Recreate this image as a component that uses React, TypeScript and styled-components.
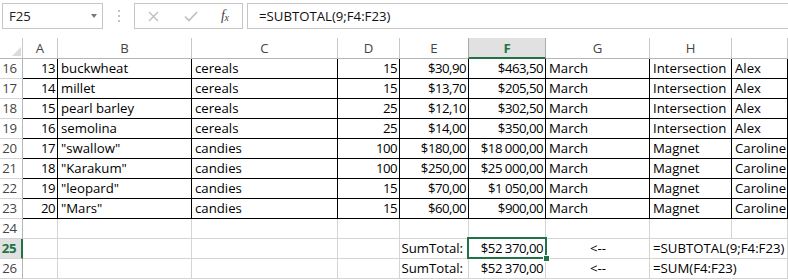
import React from 'react';
import styled, { createGlobalStyle, css } from 'styled-components';

const GREEN = '#217346';
const GRID = '#d4d4d4';
const HDR_LINE = '#c8c8c8';
const FONT = `'Open Sans', 'Liberation Sans', sans-serif`;
const FS = '13.2px';
const COLS = '23px 35px 134px 146px 62px 69px 77px 104px 82px 1fr';

const GlobalStyle = createGlobalStyle`
  html, body { margin: 0; padding: 0; background: #fff; }
  body { font-family: ${FONT}; }
`;

const Page = styled.div`
  width: 788px;
  height: 280px;
  overflow: hidden;
  background: #fff;
  display: flex;
  flex-direction: column;
`;

const FormulaBar = styled.div`
  display: flex;
  align-items: stretch;
  height: 26px;
  margin-top: 3px;
  margin-bottom: 9px;
`;

const NameBox = styled.div`
  box-sizing: border-box;
  width: 101px;
  margin-left: 2px;
  border: 1px solid #c6c6c6;
  display: flex;
  align-items: center;
  padding-left: 6px;
  font-size: ${FS};
  color: #222;
`;

const Caret = styled.span`
  margin-left: auto;
  margin-right: 5px;
  width: 0;
  height: 0;
  border-left: 3.5px solid transparent;
  border-right: 3.5px solid transparent;
  border-top: 4px solid #777;
`;

const Dots = styled.div`
  width: 31px;
  display: flex;
  flex-direction: column;
  align-items: center;
  justify-content: center;
  gap: 3px;
`;

const Dot = styled.span`
  width: 2px;
  height: 2px;
  background: #c2c2c2;
`;

const ButtonBox = styled.div`
  box-sizing: border-box;
  width: 109px;
  border: 1px solid #c6c6c6;
  display: flex;
  align-items: center;
  padding-left: 13px;
`;

const IconSlot = styled.span<{ $w: number }>`
  width: ${(p) => p.$w}px;
  display: flex;
  align-items: center;
`;

const Fx = styled.span`
  font-family: 'Liberation Serif', 'DejaVu Serif', serif;
  font-style: italic;
  font-size: 14px;
  color: #444;
  letter-spacing: -0.5px;
  sub {
    font-size: 10px;
    vertical-align: baseline;
    position: relative;
    top: 1px;
  }
`;

const FormulaInput = styled.div`
  box-sizing: border-box;
  flex: 1;
  margin-left: 4px;
  border: 1px solid #c6c6c6;
  border-right: none;
  display: flex;
  align-items: center;
  padding-left: 11px;
  font-size: ${FS};
  color: #111;
  white-space: nowrap;
`;

const Sheet = styled.div`
  display: flex;
  flex-direction: column;
`;

const Row = styled.div<{ $h: number }>`
  display: grid;
  grid-template-columns: ${COLS};
  height: ${(p) => p.$h}px;
`;

const Corner = styled.div`
  box-sizing: border-box;
  border-right: 1px solid ${HDR_LINE};
  border-bottom: 1px solid #b6b6b6;
  position: relative;
  &::after {
    content: '';
    position: absolute;
    right: 1px;
    bottom: 2px;
    width: 0;
    height: 0;
    border-left: 9px solid transparent;
    border-bottom: 9px solid #dcdcdc;
  }
`;

const ColHead = styled.div<{ $sel?: boolean }>`
  box-sizing: border-box;
  border-right: 1px solid ${HDR_LINE};
  border-bottom: 1px solid #b6b6b6;
  display: flex;
  align-items: center;
  justify-content: center;
  font-size: ${FS};
  color: #444;
  ${(p) =>
    p.$sel &&
    css`
      background: #e1e1e1;
      color: ${GREEN};
      font-weight: 700;
      border-bottom: 2px solid ${GREEN};
      border-left: 1px solid #ababab;
      margin-left: -1px;
      border-right-color: #ababab;
    `}
`;

const RowHead = styled.div<{ $sel?: boolean }>`
  box-sizing: border-box;
  border-right: 1px solid #b6b6b6;
  border-bottom: 1px solid ${GRID};
  display: flex;
  align-items: flex-end;
  justify-content: center;
  padding-right: 3px;
  padding-bottom: 1px;
  line-height: 17px;
  font-size: ${FS};
  letter-spacing: -0.4px;
  color: #444;
  ${(p) =>
    p.$sel &&
    css`
      background: #e1e1e1;
      color: ${GREEN};
      font-weight: 700;
      border-right: 2px solid ${GREEN};
    `}
`;

type Line = 'black' | 'grid' | 'none';
type Align = 'left' | 'right' | 'center';

const lineColor = (l: Line) => (l === 'black' ? '#000' : l === 'grid' ? GRID : 'transparent');

const Cell = styled.div<{ $right: Line; $bottom: Line; $align: Align; $num?: boolean; $pr?: number }>`
  box-sizing: border-box;
  position: relative;
  border-right: 1px solid ${(p) => lineColor(p.$right)};
  border-bottom: 1px solid ${(p) => lineColor(p.$bottom)};
  display: flex;
  align-items: flex-end;
  justify-content: ${(p) =>
    p.$align === 'right' ? 'flex-end' : p.$align === 'center' ? 'center' : 'flex-start'};
  padding: 0 ${(p) => p.$pr ?? 2}px 1px 3px;
  line-height: 17px;
  font-size: ${FS};
  letter-spacing: ${(p) => (p.$num ? '-0.5px' : '0')};
  color: #000;
  white-space: pre;
  overflow: visible;
  min-width: 0;
`;

const Selection = styled.div`
  position: absolute;
  left: -2px;
  top: -2px;
  right: -2px;
  bottom: -1px;
  border: 2px solid ${GREEN};
  pointer-events: none;
  z-index: 2;
`;

const FillHandle = styled.span`
  position: absolute;
  right: -5px;
  bottom: -5px;
  width: 5px;
  height: 5px;
  background: ${GREEN};
  border: 1px solid #fff;
`;

const letters = ['A', 'B', 'C', 'D', 'E', 'F', 'G', 'H', 'I'];
const dataAlign: Align[] = ['right', 'left', 'left', 'right', 'right', 'right', 'left', 'left', 'left'];
const isNum = [true, false, false, true, true, true, false, false, false];

const data: string[][] = [
  ['13', 'buckwheat', 'cereals', '15', '$30,90', '$463,50', 'March', 'Intersection', 'Alex'],
  ['14', 'millet', 'cereals', '15', '$13,70', '$205,50', 'March', 'Intersection', 'Alex'],
  ['15', 'pearl barley', 'cereals', '25', '$12,10', '$302,50', 'March', 'Intersection', 'Alex'],
  ['16', 'semolina', 'cereals', '25', '$14,00', '$350,00', 'March', 'Intersection', 'Alex'],
  ['17', '"swallow"', 'candies', '100', '$180,00', '$18 000,00', 'March', 'Magnet', 'Caroline'],
  ['18', '"Karakum"', 'candies', '100', '$250,00', '$25 000,00', 'March', 'Magnet', 'Caroline'],
  ['19', '"leopard"', 'candies', '15', '$70,00', '$1 050,00', 'March', 'Magnet', 'Caroline'],
  ['20', '"Mars"', 'candies', '15', '$60,00', '$900,00', 'March', 'Magnet', 'Caroline'],
];

const totals = [
  { row: 25, formula: '=SUBTOTAL(9;F4:F23)', selected: true },
  { row: 26, formula: '=SUM(F4:F23)', selected: false },
];

const XIcon = () => (
  <svg width="11" height="11" viewBox="0 0 11 11">
    <path d="M1 1 L10 10 M10 1 L1 10" stroke="#bdbdbd" strokeWidth="1.3" fill="none" />
  </svg>
);

const CheckIcon = () => (
  <svg width="14" height="11" viewBox="0 0 14 11">
    <path d="M1 5.5 L5 9.5 L13 1" stroke="#bdbdbd" strokeWidth="1.6" fill="none" />
  </svg>
);

export default function App() {
  return (
    <>
      <GlobalStyle />
      <Page>
        <FormulaBar>
          <NameBox>
            F25
            <Caret />
          </NameBox>
          <Dots>
            <Dot />
            <Dot />
            <Dot />
          </Dots>
          <ButtonBox>
            <IconSlot $w={36}>
              <XIcon />
            </IconSlot>
            <IconSlot $w={37}>
              <CheckIcon />
            </IconSlot>
            <IconSlot $w={20}>
              <Fx>
                f<sub>x</sub>
              </Fx>
            </IconSlot>
          </ButtonBox>
          <FormulaInput>=SUBTOTAL(9;F4:F23)</FormulaInput>
        </FormulaBar>
        <Sheet>
          <Row $h={21}>
            <Corner />
            {letters.map((l) => (
              <ColHead key={l} $sel={l === 'F'}>
                {l === 'I' ? '' : l}
              </ColHead>
            ))}
          </Row>
          {data.map((r, i) => (
            <Row $h={20} key={i}>
              <RowHead>{16 + i}</RowHead>
              {r.map((v, j) => (
                <Cell key={j} $right="black" $bottom="black" $align={dataAlign[j]} $num={isNum[j]}>
                  {v}
                </Cell>
              ))}
            </Row>
          ))}
          <Row $h={20}>
            <RowHead>24</RowHead>
            {letters.map((l) => (
              <Cell key={l} $right="grid" $bottom="grid" $align="left" />
            ))}
          </Row>
          {totals.map((t) => (
            <Row $h={20} key={t.row}>
              <RowHead $sel={t.selected}>{t.row}</RowHead>
              <Cell $right="grid" $bottom="grid" $align="left" />
              <Cell $right="grid" $bottom="grid" $align="left" />
              <Cell $right="grid" $bottom="grid" $align="left" />
              <Cell $right="grid" $bottom="grid" $align="left" />
              <Cell $right="grid" $bottom="grid" $align="right" $pr={5}>
                SumTotal:
              </Cell>
              <Cell $right="grid" $bottom="grid" $align="right" $num>
                $52 370,00
                {t.selected && (
                  <Selection>
                    <FillHandle />
                  </Selection>
                )}
              </Cell>
              <Cell $right="grid" $bottom="grid" $align="center">
                {'<--'}
              </Cell>
              <Cell $right="none" $bottom="grid" $align="left">
                {t.formula}
              </Cell>
              <Cell $right="grid" $bottom="grid" $align="left" />
            </Row>
          ))}
        </Sheet>
      </Page>
    </>
  );
}
